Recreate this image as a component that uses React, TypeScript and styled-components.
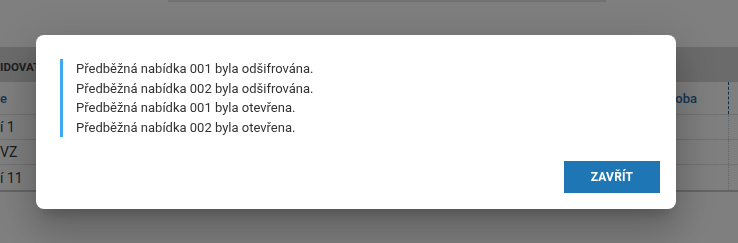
import React from 'react';
import styled, { createGlobalStyle } from 'styled-components';

const GlobalStyle = createGlobalStyle`
  html, body {
    margin: 0;
    padding: 0;
    background: #ffffff;
    font-family: Roboto, 'Liberation Sans', sans-serif;
    overflow: hidden;
  }
`;

const Page = styled.div`
  width: 738px;
  height: 243px;
  display: flex;
  flex-direction: column;
`;

const TopStrip = styled.div`
  margin-left: 168px;
  width: 438px;
  height: 2px;
  background: #e2e2e2;
`;

const Table = styled.div`
  margin-top: 45px;
  display: flex;
  flex-direction: column;
  border-bottom: 2px solid #c9c9c9;
`;

const HeadRow = styled.div`
  height: 35px;
  padding-top: 5px;
  box-sizing: border-box;
  display: flex;
  align-items: center;
  background: #d7d7d7;
  font-size: 11.6px;
  font-weight: 700;
  color: #404040;
`;

const Row = styled.div<{ $height: number }>`
  height: ${(p) => p.$height}px;
  display: flex;
  align-items: stretch;
  border-bottom: 1px solid #e3e3e3;
  box-sizing: border-box;
  &:last-child {
    border-bottom: none;
  }
`;

const Cell = styled.div<{ $width?: number; $grow?: boolean; $pad?: number }>`
  ${(p) => (p.$grow ? 'flex: 1;' : `width: ${p.$width}px;`)}
  padding-left: ${(p) => p.$pad ?? 0}px;
  display: flex;
  align-items: center;
  font-size: 14px;
  color: #3a3a3a;
  box-sizing: border-box;
`;

const EdgeCell = styled.div<{ $dashed?: boolean }>`
  width: 9px;
  border-left: 1px ${(p) => (p.$dashed ? 'dashed #1d5d94' : 'dotted #c4ccd6')};
`;

const SortLink = styled.span`
  font-size: 13px;
  font-weight: 500;
  color: #2f6fa8;
`;

const Overlay = styled.div`
  position: fixed;
  inset: 0;
  background: rgba(0, 0, 0, 0.5);
`;

const Dialog = styled.div`
  position: fixed;
  left: 36px;
  top: 35px;
  width: 640px;
  background: #ffffff;
  border-radius: 8px;
  box-shadow: 0 11px 15px -7px rgba(0, 0, 0, 0.2), 0 24px 38px 3px rgba(0, 0, 0, 0.14),
    0 9px 46px 8px rgba(0, 0, 0, 0.12);
  display: flex;
  flex-direction: column;
`;

const DialogBody = styled.div`
  padding: 24px 24px 0;
`;

const MessageList = styled.div`
  border-left: 3px solid #3ea8f2;
  padding-left: 13px;
  font-size: 13px;
  line-height: 19.5px;
  color: #333333;
`;

const DialogActions = styled.div`
  padding: 24px 16px 16px;
  display: flex;
  justify-content: flex-end;
`;

const CloseButton = styled.button`
  width: 96px;
  height: 32px;
  border: none;
  border-radius: 0;
  background: #1f76b4;
  color: #ffffff;
  font-family: Roboto, 'Liberation Sans', sans-serif;
  font-size: 12px;
  font-weight: 700;
  text-transform: uppercase;
  letter-spacing: 0.2px;
  cursor: pointer;
`;

const messages = [
  'Předběžná nabídka 001 byla odšifrována.',
  'Předběžná nabídka 002 byla odšifrována.',
  'Předběžná nabídka 001 byla otevřena.',
  'Předběžná nabídka 002 byla otevřena.',
];

const rows = ['í 1', 'VZ', 'í 11'];

const App: React.FC = () => {
  return (
    <>
      <GlobalStyle />
      <Page>
        <TopStrip />
        <Table>
          <HeadRow>IDOVAT</HeadRow>
          <Row $height={33}>
            <Cell $width={80}>
              <SortLink>e</SortLink>
            </Cell>
            <Cell $grow />
            <Cell $width={69} $pad={13}>
              <SortLink>loba</SortLink>
            </Cell>
            <EdgeCell $dashed />
          </Row>
          {rows.map((text) => (
            <Row key={text} $height={25}>
              <Cell $width={80}>{text}</Cell>
              <Cell $grow />
              <Cell $width={69} />
              <EdgeCell />
            </Row>
          ))}
        </Table>
      </Page>
      <Overlay />
      <Dialog>
        <DialogBody>
          <MessageList>
            {messages.map((m) => (
              <div key={m}>{m}</div>
            ))}
          </MessageList>
        </DialogBody>
        <DialogActions>
          <CloseButton type='button'>Zavřít</CloseButton>
        </DialogActions>
      </Dialog>
    </>
  );
};

export default App;
